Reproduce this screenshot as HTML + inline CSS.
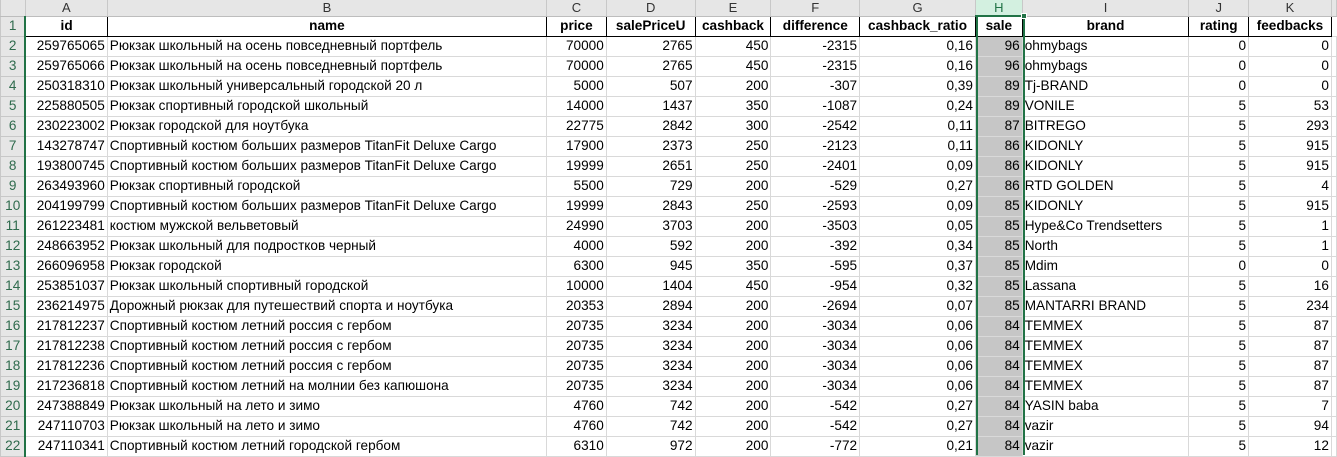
<!DOCTYPE html>
<html><head><meta charset="utf-8"><style>
*{margin:0;padding:0;box-sizing:border-box}
body{width:1337px;height:444px;overflow:hidden;background:#fff;font-family:"Liberation Sans",Arial,sans-serif;font-size:13.6px;position:relative}
table{border-collapse:collapse;table-layout:fixed;position:absolute;left:0;top:0}
td{height:20px;border:1px solid #d9d9d9;white-space:nowrap;overflow:hidden;padding:0 2px;line-height:18px;color:#000}
tr.h td{height:16px;background:#e6e6e6;border-color:#c8c8c8;text-align:center;color:#333;line-height:14px;font-size:13px;border-bottom:1px solid #bdbdbd;border-top:none}
td.rh{background:#e6e6e6;border-color:#c8c8c8;text-align:center;color:#2f6b4d;border-right:2px solid #217346}
tr.h td.rh{border-right:1px solid #c8c8c8}
tr.h td.sel{background:#d3f0e0;color:#217346;border-bottom:2px solid #217346}
tr.r1 td:not(.rh){border:1px solid #000;font-weight:bold;text-align:center}
td.n{text-align:right}
td.g{background:#c6c6c6;text-align:right}
#selbox{position:absolute;left:976px;top:15px;width:49px;height:440px;border:2px solid #217346;border-bottom:none}
#handle{position:absolute;left:1021px;top:13px;width:6px;height:6px;background:#217346;border:1px solid #fff}
</style></head><body>
<table>
<colgroup><col style="width:25px"><col style="width:82px"><col style="width:440px"><col style="width:60px"><col style="width:89px"><col style="width:76px"><col style="width:89px"><col style="width:116px"><col style="width:47px"><col style="width:167px"><col style="width:60px"><col style="width:83px"><col style="width:3px"></colgroup>
<tr class="h"><td class="rh"></td><td>A</td><td>B</td><td>C</td><td>D</td><td>E</td><td>F</td><td>G</td><td class="sel">H</td><td>I</td><td>J</td><td>K</td><td></td></tr>
<tr class="r1"><td class="rh">1</td><td>id</td><td>name</td><td>price</td><td>salePriceU</td><td>cashback</td><td>difference</td><td>cashback_ratio</td><td style="background:#fff">sale</td><td>brand</td><td>rating</td><td>feedbacks</td><td style="border:none"></td></tr>
<tr><td class="rh">2</td><td class="n">259765065</td><td>Рюкзак школьный на осень повседневный портфель</td><td class="n">70000</td><td class="n">2765</td><td class="n">450</td><td class="n">-2315</td><td class="n">0,16</td><td class="g">96</td><td>ohmybags</td><td class="n">0</td><td class="n">0</td><td></td></tr>
<tr><td class="rh">3</td><td class="n">259765066</td><td>Рюкзак школьный на осень повседневный портфель</td><td class="n">70000</td><td class="n">2765</td><td class="n">450</td><td class="n">-2315</td><td class="n">0,16</td><td class="g">96</td><td>ohmybags</td><td class="n">0</td><td class="n">0</td><td></td></tr>
<tr><td class="rh">4</td><td class="n">250318310</td><td>Рюкзак школьный универсальный городской 20 л</td><td class="n">5000</td><td class="n">507</td><td class="n">200</td><td class="n">-307</td><td class="n">0,39</td><td class="g">89</td><td>Tj-BRAND</td><td class="n">0</td><td class="n">0</td><td></td></tr>
<tr><td class="rh">5</td><td class="n">225880505</td><td>Рюкзак спортивный городской школьный</td><td class="n">14000</td><td class="n">1437</td><td class="n">350</td><td class="n">-1087</td><td class="n">0,24</td><td class="g">89</td><td>VONILE</td><td class="n">5</td><td class="n">53</td><td></td></tr>
<tr><td class="rh">6</td><td class="n">230223002</td><td>Рюкзак городской для ноутбука</td><td class="n">22775</td><td class="n">2842</td><td class="n">300</td><td class="n">-2542</td><td class="n">0,11</td><td class="g">87</td><td>BITREGO</td><td class="n">5</td><td class="n">293</td><td></td></tr>
<tr><td class="rh">7</td><td class="n">143278747</td><td>Спортивный костюм больших размеров TitanFit Deluxe Cargo</td><td class="n">17900</td><td class="n">2373</td><td class="n">250</td><td class="n">-2123</td><td class="n">0,11</td><td class="g">86</td><td>KIDONLY</td><td class="n">5</td><td class="n">915</td><td></td></tr>
<tr><td class="rh">8</td><td class="n">193800745</td><td>Спортивный костюм больших размеров TitanFit Deluxe Cargo</td><td class="n">19999</td><td class="n">2651</td><td class="n">250</td><td class="n">-2401</td><td class="n">0,09</td><td class="g">86</td><td>KIDONLY</td><td class="n">5</td><td class="n">915</td><td></td></tr>
<tr><td class="rh">9</td><td class="n">263493960</td><td>Рюкзак спортивный городской</td><td class="n">5500</td><td class="n">729</td><td class="n">200</td><td class="n">-529</td><td class="n">0,27</td><td class="g">86</td><td>RTD GOLDEN</td><td class="n">5</td><td class="n">4</td><td></td></tr>
<tr><td class="rh">10</td><td class="n">204199799</td><td>Спортивный костюм больших размеров TitanFit Deluxe Cargo</td><td class="n">19999</td><td class="n">2843</td><td class="n">250</td><td class="n">-2593</td><td class="n">0,09</td><td class="g">85</td><td>KIDONLY</td><td class="n">5</td><td class="n">915</td><td></td></tr>
<tr><td class="rh">11</td><td class="n">261223481</td><td>костюм мужской вельветовый</td><td class="n">24990</td><td class="n">3703</td><td class="n">200</td><td class="n">-3503</td><td class="n">0,05</td><td class="g">85</td><td>Hype&amp;Co Trendsetters</td><td class="n">5</td><td class="n">1</td><td></td></tr>
<tr><td class="rh">12</td><td class="n">248663952</td><td>Рюкзак школьный для подростков черный</td><td class="n">4000</td><td class="n">592</td><td class="n">200</td><td class="n">-392</td><td class="n">0,34</td><td class="g">85</td><td>North</td><td class="n">5</td><td class="n">1</td><td></td></tr>
<tr><td class="rh">13</td><td class="n">266096958</td><td>Рюкзак городской</td><td class="n">6300</td><td class="n">945</td><td class="n">350</td><td class="n">-595</td><td class="n">0,37</td><td class="g">85</td><td>Mdim</td><td class="n">0</td><td class="n">0</td><td></td></tr>
<tr><td class="rh">14</td><td class="n">253851037</td><td>Рюкзак школьный спортивный городской</td><td class="n">10000</td><td class="n">1404</td><td class="n">450</td><td class="n">-954</td><td class="n">0,32</td><td class="g">85</td><td>Lassana</td><td class="n">5</td><td class="n">16</td><td></td></tr>
<tr><td class="rh">15</td><td class="n">236214975</td><td>Дорожный рюкзак для путешествий спорта и ноутбука</td><td class="n">20353</td><td class="n">2894</td><td class="n">200</td><td class="n">-2694</td><td class="n">0,07</td><td class="g">85</td><td>MANTARRI BRAND</td><td class="n">5</td><td class="n">234</td><td></td></tr>
<tr><td class="rh">16</td><td class="n">217812237</td><td>Спортивный костюм летний россия с гербом</td><td class="n">20735</td><td class="n">3234</td><td class="n">200</td><td class="n">-3034</td><td class="n">0,06</td><td class="g">84</td><td>TEMMEX</td><td class="n">5</td><td class="n">87</td><td></td></tr>
<tr><td class="rh">17</td><td class="n">217812238</td><td>Спортивный костюм летний россия с гербом</td><td class="n">20735</td><td class="n">3234</td><td class="n">200</td><td class="n">-3034</td><td class="n">0,06</td><td class="g">84</td><td>TEMMEX</td><td class="n">5</td><td class="n">87</td><td></td></tr>
<tr><td class="rh">18</td><td class="n">217812236</td><td>Спортивный костюм летний россия с гербом</td><td class="n">20735</td><td class="n">3234</td><td class="n">200</td><td class="n">-3034</td><td class="n">0,06</td><td class="g">84</td><td>TEMMEX</td><td class="n">5</td><td class="n">87</td><td></td></tr>
<tr><td class="rh">19</td><td class="n">217236818</td><td>Спортивный костюм летний на молнии без капюшона</td><td class="n">20735</td><td class="n">3234</td><td class="n">200</td><td class="n">-3034</td><td class="n">0,06</td><td class="g">84</td><td>TEMMEX</td><td class="n">5</td><td class="n">87</td><td></td></tr>
<tr><td class="rh">20</td><td class="n">247388849</td><td>Рюкзак школьный на лето и зимо</td><td class="n">4760</td><td class="n">742</td><td class="n">200</td><td class="n">-542</td><td class="n">0,27</td><td class="g">84</td><td>YASIN baba</td><td class="n">5</td><td class="n">7</td><td></td></tr>
<tr><td class="rh">21</td><td class="n">247110703</td><td>Рюкзак школьный на лето и зимо</td><td class="n">4760</td><td class="n">742</td><td class="n">200</td><td class="n">-542</td><td class="n">0,27</td><td class="g">84</td><td>vazir</td><td class="n">5</td><td class="n">94</td><td></td></tr>
<tr><td class="rh">22</td><td class="n">247110341</td><td>Спортивный костюм летний городской гербом</td><td class="n">6310</td><td class="n">972</td><td class="n">200</td><td class="n">-772</td><td class="n">0,21</td><td class="g">84</td><td>vazir</td><td class="n">5</td><td class="n">12</td><td></td></tr>
</table>
<div id="selbox"></div><div id="handle"></div>
</body></html>
